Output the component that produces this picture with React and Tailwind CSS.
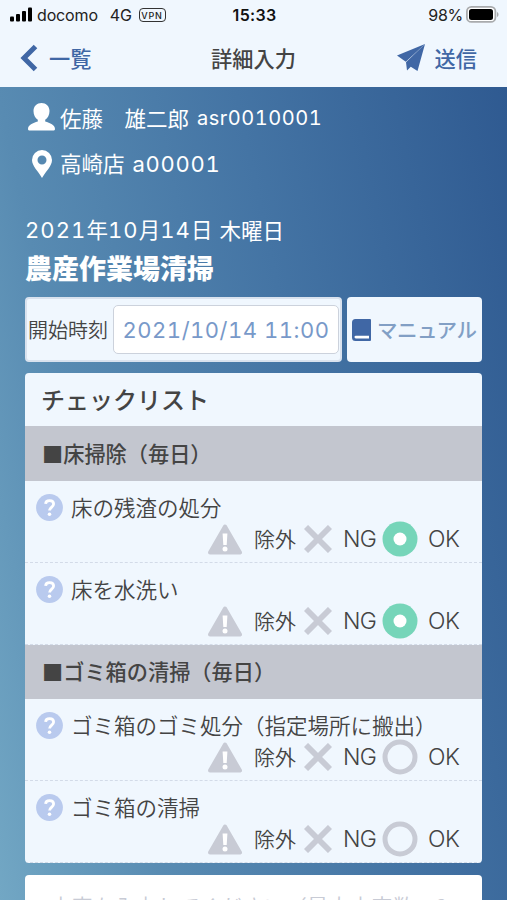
const SECTIONS = [
  {
    title: '■床掃除（毎日）',
    height: 'h-[55px]',
    items: [
      { label: '床の残渣の処分', ok: true },
      { label: '床を水洗い', ok: true },
    ],
  },
  {
    title: '■ゴミ箱の清掃（毎日）',
    height: 'h-[54px]',
    items: [
      { label: 'ゴミ箱のゴミ処分（指定場所に搬出）', ok: false },
      { label: 'ゴミ箱の清掃', ok: false },
    ],
  },
]

function StatusBar() {
  return (
    <div className="grid h-[30px] grid-cols-[1fr_auto_1fr] items-center pl-[10px] pr-[8px] font-['Inter',sans-serif] text-[16px] leading-none text-[#222]">
      <div className="flex items-center">
        <svg className="-mt-[2px]" width="23" height="15" viewBox="0 0 23 15" fill="#000">
          <rect x="0" y="9.5" width="4" height="5" rx="1" />
          <rect x="6" y="7" width="4" height="7.5" rx="1" />
          <rect x="12" y="4" width="4" height="10.5" rx="1" />
          <rect x="18" y="0.5" width="4" height="14" rx="1" />
        </svg>
        <span className="ml-[4px] tracking-[-0.15px]">docomo</span>
        <span className="ml-[12px] tracking-[-0.3px]">4G</span>
        <span className="ml-[7px] flex h-[14px] w-[27px] items-center justify-center rounded-[4px] border-[1.5px] border-[#333] text-[9px] font-medium tracking-[0.8px]">
          VPN
        </span>
      </div>
      <div className="text-[16px] font-semibold tracking-[0.3px] text-[#111]">15:33</div>
      <div className="flex items-center justify-end">
        <span className="tracking-[-0.3px]">98%</span>
        <svg className="-mt-[2px] ml-[3px]" width="33" height="17" viewBox="0 0 33 17">
          <rect x="0.9" y="0.9" width="28.5" height="15" rx="4.5" fill="#fff" stroke="#a9abad" strokeWidth="1.8" />
          <rect x="3" y="3" width="24" height="11" rx="2.5" fill="#000" />
          <path d="M31 6v5c2-.8 2-4.200 0-5z" fill="#a9abad" />
        </svg>
      </div>
    </div>
  )
}

function NavBar() {
  return (
    <div className="grid h-[57px] grid-cols-[1fr_auto_1fr] items-center pb-[2px] pl-[20px] pr-[30px] text-[21.200px] font-medium leading-none text-[#4067a5]">
      <div className="flex items-center">
        <svg width="18" height="28" viewBox="0 0 18 28" fill="none" stroke="#4067a5" strokeWidth="5">
          <path d="M15.500 2.500 4 14l11.500 11.500" />
        </svg>
        <span className="ml-[11px]">一覧</span>
      </div>
      <div className="pl-[10px] text-[#444]">詳細入力</div>
      <div className="flex items-center justify-end">
        <svg width="28" height="27" viewBox="0 0 28 27" fill="#4067a5">
          <path d="M28 0 0 11.500l8.800 6.200z" />
          <path d="M28 0 9 18.300 10 26.500l3.800-3.700L20.500 27z" />
        </svg>
        <span className="ml-[10px]">送信</span>
      </div>
    </div>
  )
}

function Choices({ ok }) {
  return (
    <div className="flex h-[36px] items-center justify-end pr-[21px] text-[21px] font-[350] leading-none text-[#444]">
      <svg width="34" height="31" viewBox="0 0 34 31">
        <path d="M17 2.500 32 28.500H2z" fill="#c8cbd5" stroke="#c8cbd5" strokeWidth="4" strokeLinejoin="round" />
        <path d="M14.600 9.500h4.800l-.7 11.500h-3.400z" fill="#fff" />
        <circle cx="17" cy="25" r="2.500" fill="#fff" />
      </svg>
      <span className="-mt-[2px] ml-[12px]">除外</span>
      <svg className="ml-[8px]" width="28" height="28" viewBox="0 0 28 28" stroke="#c8cbd5" strokeWidth="5.800">
        <path d="M2 2l24 24M26 2L2 26" />
      </svg>
      <span className="ml-[11px] w-[34px] font-['Inter','Noto_Sans_CJK_JP',sans-serif] text-[23px] font-light tracking-[-0.8px]">NG</span>
      <svg className="ml-[5px]" width="36" height="36" viewBox="0 0 36 36">
        {ok ? (
          <>
            <circle cx="18" cy="18" r="17.500" fill="#76d5b9" />
            <circle cx="18" cy="18" r="6.500" fill="#fff" />
          </>
        ) : (
          <circle cx="18" cy="18" r="15" fill="none" stroke="#c8cbd5" strokeWidth="5" />
        )}
      </svg>
      <span className="ml-[10px] w-[33px] font-['Inter','Noto_Sans_CJK_JP',sans-serif] text-[23px] font-light tracking-[-0.5px]">OK</span>
    </div>
  )
}

function CheckItem({ label, ok }) {
  return (
    <div className="h-[82px] border-b border-dashed border-[#d3dbe8] pt-[9px]">
      <div className="flex h-[36px] items-center pl-[11px]">
        <svg className="-mt-px" width="27" height="27" viewBox="0 0 27 27">
          <circle cx="13.500" cy="13.500" r="13.400" fill="#b9caee" />
          <path d="M9.600 9.800c.3-4.200 8-4.100 8 .2 0 3-4 3.200-4 6.600" fill="none" stroke="#fff" strokeWidth="2.800" />
          <circle cx="13.500" cy="20.300" r="1.800" fill="#fff" />
        </svg>
        <span className="-mt-[3px] ml-[8px] text-[21.500px] font-[350] leading-none text-[#444]">{label}</span>
      </div>
      <div className="-mt-[5px]">
        <Choices ok={ok} />
      </div>
    </div>
  )
}

// 和文の間に入る数字だけ字幅を広げる
function Num({ children }) {
  return <span className="font-['Inter',sans-serif] text-[22px] tabular-nums tracking-[1.100px]">{children}</span>
}

export default function App() {
  return (
    <div className="h-[900px] w-full overflow-hidden bg-[#f0f7fe] font-['Noto_Sans_CJK_JP',sans-serif]">
      <StatusBar />
      <NavBar />
      <main className="h-[813px] overflow-hidden bg-[linear-gradient(78deg,#72a7c4_0%,#588bb2_25%,#4474a4_60%,#2f5a91_100%)] px-[25px] pt-[13px] text-white">
        <div className="flex h-[36px] items-center pl-[3px]">
          <svg className="-mt-[2px]" width="27" height="28" viewBox="0 0 27 28" fill="#fff">
            <path d="M13.500 0C9 0 5.500 3.200 5.500 8c0 4 1.700 7.300 4.300 8.700v1.800C5 20 0 22 0 26c0 1.200.8 1.500 2 1.500h23c1.200 0 2-.3 2-1.500 0-4-5-6-9.800-7.500v-1.800C19.800 15.300 21.500 12 21.500 8c0-4.800-3.500-8-8-8z" />
          </svg>
          <span className="-mt-px ml-[5px] text-[21.500px] leading-none">佐藤　雄二郎</span>
          <span className="ml-[8px] font-['Inter',sans-serif] text-[20px] leading-none tabular-nums tracking-[0.500px]">asr0010001</span>
        </div>
        <div className="mt-[10px] flex h-[36px] items-center pl-[7px]">
          <svg width="20" height="28" viewBox="0 0 20 28" fill="#fff">
            <path fillRule="evenodd" d="M10 0a10 10 0 0 1 10 10c0 6-6 11-10 18C6 21 0 16 0 10A10 10 0 0 1 10 0zm0 5.500a4.500 4.500 0 1 0 0 9 4.500 4.500 0 0 0 0-9z" />
          </svg>
          <span className="-mt-[2px] ml-[8px] text-[21.500px] leading-none">高崎店</span>
          <span className="ml-[8px] font-['Inter',sans-serif] text-[22px] leading-none tabular-nums tracking-[0.700px]">a00001</span>
        </div>
        <div className="mt-[32px] flex h-[32px] items-center pb-px text-[21.500px] leading-none">
          <span className="whitespace-pre">
            <Num>2021</Num>年<Num>10</Num>月<Num>14</Num>日
          </span>
          <span className="ml-[7px]">木曜日</span>
        </div>
        <h1 className="mt-[4px] flex h-[38px] items-center pb-[3px] text-[27px] font-black leading-none">農産作業場清掃</h1>

        <div className="mt-[9px] flex h-[65px] gap-[5px]">
          <div className="flex w-[317px] items-center rounded-[4px] border-2 border-[#d9e2ee] bg-[#f0f7fe] pl-[1px]">
            <span className="text-[20px] font-[350] leading-none text-[#444]">開始時刻</span>
            <div className="ml-[5px] flex h-[49px] w-[226px] items-center justify-center rounded-[5px] border border-[#ccd2dc] bg-white font-['Inter',sans-serif] text-[22px] leading-none tabular-nums tracking-[0.500px] text-[#7899c9]">
              2021/10/14 11:00
            </div>
          </div>
          <div className="flex w-[135px] items-center rounded-[4px] bg-[#f0f7fe] pl-[5px]">
            <svg width="19" height="22" viewBox="0 0 19 22">
              <path d="M3.500 0H18a1 1 0 0 1 1 1v20a1 1 0 0 1-1 1H3.500A3.500 3.500 0 0 1 0 18.500v-15A3.500 3.500 0 0 1 3.500 0z" fill="#4067a5" />
              <path d="M3.800 16.800H17v2.600H3.800a1.300 1.300 0 0 1 0-2.600z" fill="#fff" />
            </svg>
            <span className="-mt-px ml-[6px] text-[20.500px] font-medium leading-none tracking-[-0.5px] text-[#829fc5]">マニュアル</span>
          </div>
        </div>

        <div className="mt-[11px] overflow-hidden rounded-[4px] bg-[#f0f7fe]">
          <div className="flex h-[53px] items-center pb-px pl-[16px] text-[24px] font-medium leading-none text-[#444]">チェックリスト</div>
          {SECTIONS.map(section => (
            <div key={section.title}>
              <div className={`${section.height} flex items-center bg-[#c3c6cf] pb-[2px] pl-[17px] text-[21.200px] font-medium leading-none text-[#444]`}>
                {section.title}
              </div>
              {section.items.map(item => (
                <CheckItem key={item.label} {...item} />
              ))}
            </div>
          ))}
        </div>

        <div className="mt-[12px] h-[80px] whitespace-nowrap rounded-t-[4px] bg-white pl-[25px] pt-[20px] text-[21.500px] font-[350] leading-none text-[#c8cbd5]">
          内容を入力してください（最大文字数：2
        </div>
      </main>
    </div>
  )
}
